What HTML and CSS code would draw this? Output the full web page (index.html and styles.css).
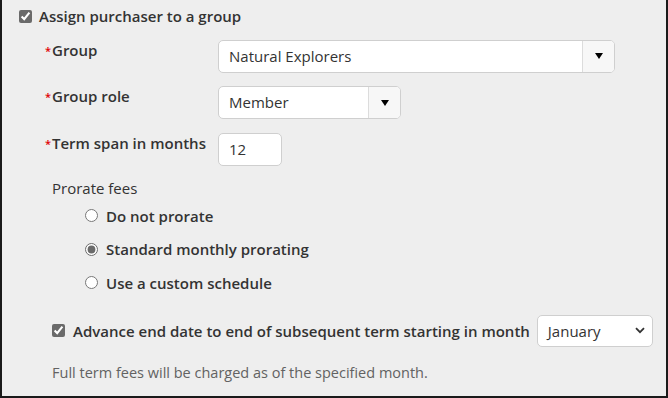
FILE: index.html
```html
<!DOCTYPE html>
<html lang="en">
<head>
  <meta charset="UTF-8" />
  <title>Assign purchaser to a group</title>
  <link rel="stylesheet" href="styles.css">
</head>
<body>
  <div class="panel">
    <!-- Top toggle -->
    <label class="assign">
      <input type="checkbox" class="check" checked>
      <span>Assign purchaser to a group</span>
    </label>

    <div class="fields">
      <div class="row">
        <div class="label"><span class="req">*</span>Group</div>
        <div class="combo combo-wide">
          <span class="combo-text">Natural Explorers</span>
          <span class="combo-btn"><span class="tri"></span></span>
        </div>
      </div>

      <div class="row">
        <div class="label"><span class="req">*</span>Group role</div>
        <div class="combo combo-role">
          <span class="combo-text">Member</span>
          <span class="combo-btn"><span class="tri"></span></span>
        </div>
      </div>

      <div class="row">
        <div class="label"><span class="req">*</span>Term span in months</div>
        <div class="textbox">12</div>
      </div>

      <!-- Prorating -->
      <div class="prorate-title">Prorate fees</div>
      <div class="radios">
        <label class="radio"><input type="radio" name="prorate"> Do not prorate</label>
        <label class="radio"><input type="radio" name="prorate" checked> Standard monthly prorating</label>
        <label class="radio"><input type="radio" name="prorate"> Use a custom schedule</label>
      </div>

      <div class="advance">
        <label class="advance-label">
          <input type="checkbox" class="check" checked>
          <span>Advance end date to end of subsequent term starting in month</span>
        </label>
        <div class="month">
          <span>January</span>
          <svg width="10" height="7" viewBox="0 0 10 7"><path d="M1 1.2 L5 5.2 L9 1.2" fill="none" stroke="#333" stroke-width="1.8"/></svg>
        </div>
      </div>

      <p class="hint">Full term fees will be charged as of the specified month.</p>
    </div>
  </div>
</body>
</html>
```

FILE: styles.css
```css
* { box-sizing: border-box; margin: 0; padding: 0; }

body {
  font-family: 'Open Sans', 'Liberation Sans', sans-serif;
  font-size: 15px;
  color: #333;
  background: #eeeeee;
}

.panel {
  width: 668px;
  height: 398px;
  background: #eeeeee;
  border: 2px solid #1a1a1a;
  border-top: none;
}

.check {
  width: 13px;
  height: 13px;
  margin: 0;
  accent-color: #6a6a6a;
}

.assign {
  display: flex;
  align-items: center;
  gap: 7px;
  padding: 6px 0 0 17px;
  line-height: 20px;
  font-weight: 600;
}

.fields {
  padding-left: 50px;
}

.row {
  display: flex;
  align-items: flex-start;
  margin-top: 13.5px;
}

.label {
  width: 166px;
  line-height: 20px;
  font-weight: 600;
}

.req {
  color: #e00000;
  font-size: 11px;
  margin-left: -7px;
  display: inline-block;
  width: 7px;
  vertical-align: top;
  line-height: 22px;
}

.combo {
  display: flex;
  height: 33px;
  background: #fff;
  border: 1px solid #cfcfcf;
  border-radius: 5px;
  overflow: hidden;
}

.combo-wide { width: 397px; }
.combo-role { width: 183px; }

.combo-text {
  flex: 1;
  padding-left: 10px;
  line-height: 31px;
}

.combo-btn {
  width: 32px;
  background: #f7f7f7;
  border-left: 1px solid #dcdcdc;
  display: flex;
  align-items: center;
  justify-content: center;
}

.tri {
  width: 0;
  height: 0;
  border-left: 4px solid transparent;
  border-right: 4px solid transparent;
  border-top: 6px solid #000;
}

.textbox {
  width: 64px;
  height: 33px;
  background: #fff;
  border: 1px solid #cfcfcf;
  border-radius: 5px;
  padding-left: 10px;
  line-height: 31px;
}

.prorate-title {
  margin-top: 12px;
  line-height: 20px;
}

.radios {
  display: flex;
  flex-direction: column;
  gap: 13.5px;
  margin-top: 8px;
  padding-left: 33px;
}

.radio {
  display: flex;
  align-items: center;
  gap: 8px;
  line-height: 20px;
  font-weight: 600;
}

.radio input {
  width: 13px;
  height: 13px;
  margin: 0;
  accent-color: #6a6a6a;
}

.advance {
  display: flex;
  align-items: center;
  gap: 7px;
  margin-top: 22px;
}

.advance-label {
  display: flex;
  align-items: center;
  gap: 8px;
  font-weight: 600;
  line-height: 20px;
}

.month {
  width: 116px;
  height: 32px;
  background: #fff;
  border: 1px solid #cfcfcf;
  border-radius: 5px;
  display: flex;
  align-items: center;
  justify-content: space-between;
  padding: 0 7px 0 10px;
}

.hint {
  margin-top: 16px;
  line-height: 20px;
  font-size: 14.5px;
  color: #626262;
}
```
